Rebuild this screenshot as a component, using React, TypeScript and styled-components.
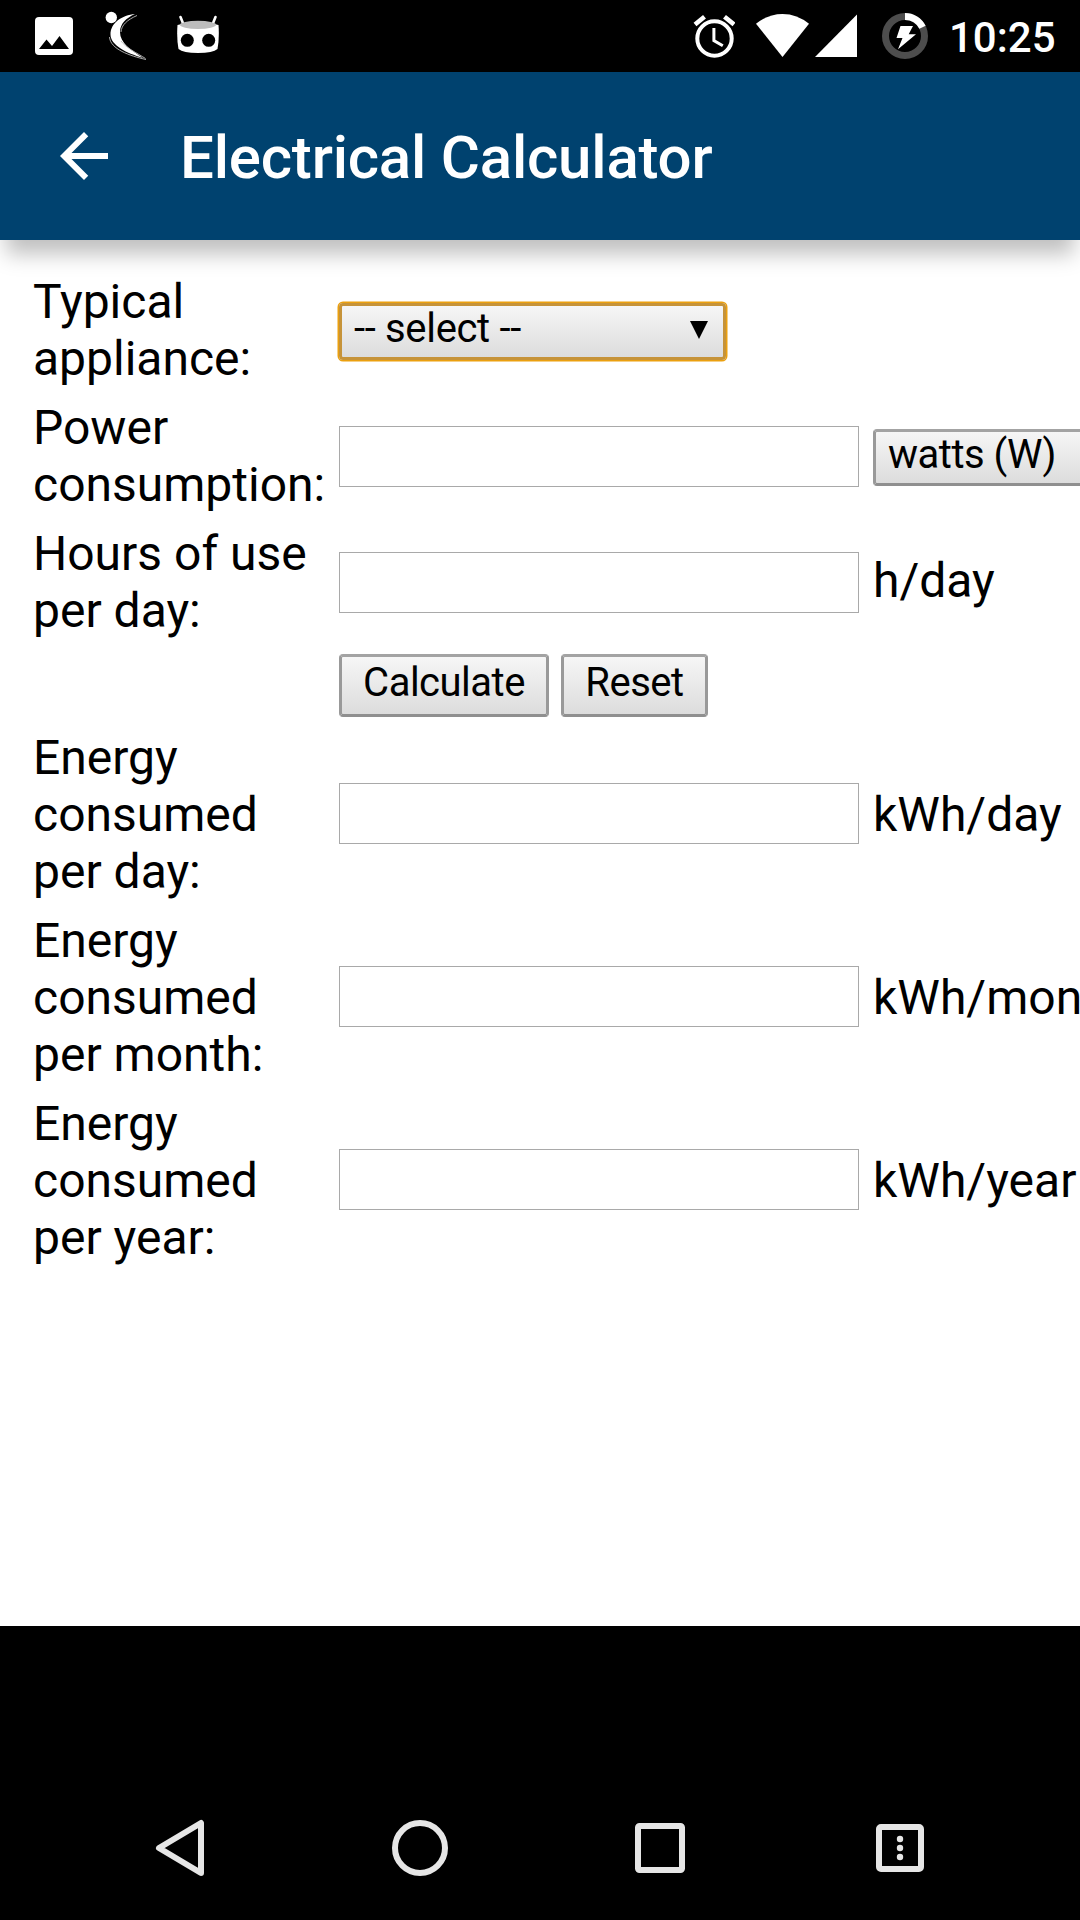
import React from "react";
import styled, { createGlobalStyle } from "styled-components";

const GlobalStyle = createGlobalStyle`
  html, body { margin: 0; padding: 0; background: #000; overflow: hidden; }
  * { box-sizing: border-box; }
`;

const Screen = styled.div`
  width: 1080px;
  height: 1920px;
  display: flex;
  flex-direction: column;
  overflow: hidden;
  background: #000;
  color: #000;
  font-family: Roboto, "Liberation Sans", sans-serif;
`;

const StatusBar = styled.header`
  height: 72px;
  flex: none;
  display: flex;
  justify-content: space-between;
  padding: 0 26px 0 35px;
`;

const IconGroup = styled.div`
  display: flex;
  align-items: center;
`;

const Glyph = styled.svg<{ $gap?: number }>`
  display: block;
  flex: none;
  margin-left: ${(p) => p.$gap ?? 0}px;
`;

const Clock = styled.time`
  width: 105px;
  margin-left: 21px;
  padding-top: 4px;
  color: #fff;
  font-size: 42px;
  line-height: 50px;
  font-weight: 500;
  white-space: nowrap;
`;

const AppBar = styled.div`
  height: 168px;
  flex: none;
  display: flex;
  align-items: center;
  padding-left: 48px;
  background: #00426f;
  position: relative;
  z-index: 1;
  box-shadow: 0 20px 20px -6px rgba(0, 0, 0, 0.25);
`;

const Title = styled.h1`
  margin: 4px 0 0 60px;
  color: #fff;
  font-size: 60px;
  line-height: 70px;
  font-weight: 500;
  letter-spacing: -0.2px;
  white-space: nowrap;
`;

const Page = styled.main`
  height: 1386px;
  flex: none;
  padding: 33px 0 0 33px;
  background: #fff;
  overflow: hidden;
`;

const Form = styled.form`
  display: grid;
  grid-template-columns: 294px 522px max-content;
  grid-template-rows: 114px 114px 114px 66px 171px 171px 171px;
  row-gap: 12px;
  column-gap: 12px;
  align-items: center;
  font-size: 48px;
  line-height: 57px;
`;

const Label = styled.label`
  white-space: pre-line;
`;

const Unit = styled.span<{ $raise?: number }>`
  white-space: nowrap;
  margin-bottom: ${(p) => p.$raise ?? 0}px;
`;

const Field = styled.input`
  width: 520px;
  height: 61px;
  margin: 0;
  padding: 0 6px;
  border: 1px solid #a9a9a9;
  border-radius: 0;
  background: #fff;
  font: 40px Roboto, sans-serif;
  outline: none;
`;

const ResultField = styled(Field)`
  margin-bottom: 2px;
`;

const Control = styled.button`
  margin: 0;
  border: 3px solid;
  border-color: #a3a3a3 #999 #8f8f8f;
  border-radius: 4px;
  background: linear-gradient(#f6f6f6, #dcdcdc);
  color: #000;
  font: 40px/47px Roboto, "Liberation Sans", sans-serif;
  letter-spacing: -0.5px;
  white-space: nowrap;
  display: flex;
`;

const Select = styled(Control)<{ $width: number; $focused?: boolean }>`
  width: ${(p) => p.$width}px;
  height: 57px;
  margin-top: 3px;
  padding: 0 12px;
  justify-content: space-between;
  align-items: flex-start;
  line-height: 45px;
  letter-spacing: ${(p) => (p.$focused ? -0.33 : -0.5)}px;
  box-shadow: ${(p) => (p.$focused ? "0 0 0 1.5px #eba00f" : "none")};
  border-color: ${(p) => (p.$focused ? "#c69339" : "#a3a3a3 #999 #8f8f8f")};
`;

const Caret = styled.svg`
  display: block;
  margin: 15px 3px 0 0;
`;

const PushButton = styled(Control)<{ $width: number }>`
  width: ${(p) => p.$width}px;
  height: 63px;
  justify-content: center;
  padding: 2px 0 0;
`;

const Actions = styled.div`
  grid-column: 2;
  display: flex;
  gap: 12px;
  padding-top: 3px;
`;

const NavBar = styled.nav`
  height: 144px;
  margin-top: auto;
  flex: none;
  display: flex;
  align-items: center;
  justify-content: center;
  gap: 168px;
`;

function Chevron() {
  return (
    <Caret width="18" height="18" viewBox="0 0 18 18">
      <path d="M0 0H18L9 18Z" />
    </Caret>
  );
}

const results = [
  { label: "Energy\nconsumed\nper day:", unit: "kWh/day" },
  { label: "Energy\nconsumed\nper month:", unit: "kWh/month" },
  { label: "Energy\nconsumed\nper year:", unit: "kWh/year" },
];

export default function App() {
  return (
    <Screen>
      <GlobalStyle />
      <StatusBar>
        <IconGroup>
          <Glyph width="38" height="72" viewBox="35 0 38 72">
            <rect x="35" y="17" width="38" height="38" rx="4" fill="#fff" />
            <path d="M39 49L46.5 39.5L52 46L59.5 36L69 49Z" />
          </Glyph>
          <Glyph $gap={31} width="44" height="72" viewBox="104 0 44 72">
            <circle cx="111.3" cy="17.5" r="5.7" fill="#fff" />
            <path
              d="M135 14C122 15 110.500 23 110.500 34.500C110.500 45 126 53 143 58C131 50 120 43 120 32C120 24 126 18 135 14Z"
              fill="#fff"
            />
            <path
              d="M137 15.500C127 20 121.500 25 121 32M109.500 37C110 49 130 56 146 59.500M121 41C126 48 137 53 145.500 58.500"
              fill="none"
              stroke="#bbb"
              strokeWidth="0.9"
            />
          </Glyph>
          <Glyph $gap={29} width="42" height="72" viewBox="177 0 42 72">
            <path d="M180.500 17L183.300 24M215.500 17L212.700 24" stroke="#fff" strokeWidth="2.600" strokeLinecap="round" />
            <path
              d="M177.500 25Q198 19 218.500 25Q219.500 38 217.500 49Q213 53 198 53Q183 53 178.500 49Q176.500 38 177.500 25Z"
              fill="#fff"
            />
            <ellipse cx="198" cy="24.800" rx="18.200" ry="4.100" fill="#bdbdbd" />
            <circle cx="187.300" cy="40.300" r="6.500" />
            <circle cx="208.700" cy="40.300" r="6.500" />
          </Glyph>
        </IconGroup>
        <IconGroup>
          <Glyph width="42" height="72" viewBox="693 0 42 72">
            <g fill="none" stroke="#fff">
              <circle cx="714.500" cy="38.500" r="17.200" strokeWidth="4" />
              <path d="M695 24.500L704.500 16.800M734 24.500L724.500 16.800" strokeWidth="4.600" />
              <path d="M713.900 28V40.600L722.800 45.800" strokeWidth="3" />
            </g>
          </Glyph>
          <Glyph $gap={21} width="53" height="72" viewBox="756 0 53 72">
            <path d="M756 23.800Q768 14 782.500 14Q797 14 809 23.800L782.500 57Z" fill="#fff" />
          </Glyph>
          <Glyph $gap={6} width="42" height="72" viewBox="815 0 42 72">
            <path d="M815 57L857 14.500V57Z" fill="#fff" />
          </Glyph>
          <Glyph $gap={25} width="46" height="72" viewBox="882 0 46 72">
            <circle cx="905" cy="36" r="19.500" fill="none" stroke="#4d4d4d" strokeWidth="7" />
            <path d="M905 16.500A19.500 19.500 0 0 1 922.500 27.300" fill="none" stroke="#fff" strokeWidth="7" />
            <path d="M900.500 26H913L908.700 34.200H916L898 49.300L902.500 38H896.500Z" fill="#fff" />
          </Glyph>
          <Clock>10:25</Clock>
        </IconGroup>
      </StatusBar>

      <AppBar>
        <Glyph width="72" height="72" viewBox="0 0 24 24">
          <path d="M20 11H7.830l5.590-5.590L12 4l-8 8 8 8 1.410-1.410L7.830 13H20v-2z" fill="#fff" />
        </Glyph>
        <Title>Electrical Calculator</Title>
      </AppBar>

      <Page>
        <Form onSubmit={(e) => e.preventDefault()}>
          <Label>{"Typical\nappliance:"}</Label>
          <Select type="button" $width={387} $focused>
            -- select --
            <Chevron />
          </Select>
          <span />

          <Label>{"Power\nconsumption:"}</Label>
          <Field />
          <Select type="button" $width={270}>
            watts (W)
            <Chevron />
          </Select>

          <Label>{"Hours of use\nper day:"}</Label>
          <Field />
          <Unit $raise={3}>h/day</Unit>

          <Actions>
            <PushButton type="submit" $width={210}>Calculate</PushButton>
            <PushButton type="reset" $width={147}>Reset</PushButton>
          </Actions>
          <span />

          {results.map((r) => (
            <React.Fragment key={r.unit}>
              <Label>{r.label}</Label>
              <ResultField readOnly />
              <Unit>{r.unit}</Unit>
            </React.Fragment>
          ))}
        </Form>
      </Page>

      <NavBar>
        <Glyph width="72" height="72" viewBox="144 1812 72 72">
          <path d="M201 1823V1873L159 1848Z" fill="none" stroke="#e6e6e6" strokeWidth="6" strokeLinejoin="round" />
        </Glyph>
        <Glyph width="72" height="72" viewBox="384 1812 72 72">
          <circle cx="420" cy="1848" r="25" fill="none" stroke="#e6e6e6" strokeWidth="6" />
        </Glyph>
        <Glyph width="72" height="72" viewBox="624 1812 72 72">
          <rect x="638" y="1826" width="44" height="44" rx="1.500" fill="none" stroke="#e6e6e6" strokeWidth="6" />
        </Glyph>
        <Glyph width="72" height="72" viewBox="864 1812 72 72">
          <rect x="879" y="1827" width="42" height="42" rx="2" fill="none" stroke="#e6e6e6" strokeWidth="6" />
          <g fill="#e6e6e6">
            <circle cx="900" cy="1839" r="3.200" />
            <circle cx="900" cy="1848" r="3.200" />
            <circle cx="900" cy="1857" r="3.200" />
          </g>
        </Glyph>
      </NavBar>
    </Screen>
  );
}
